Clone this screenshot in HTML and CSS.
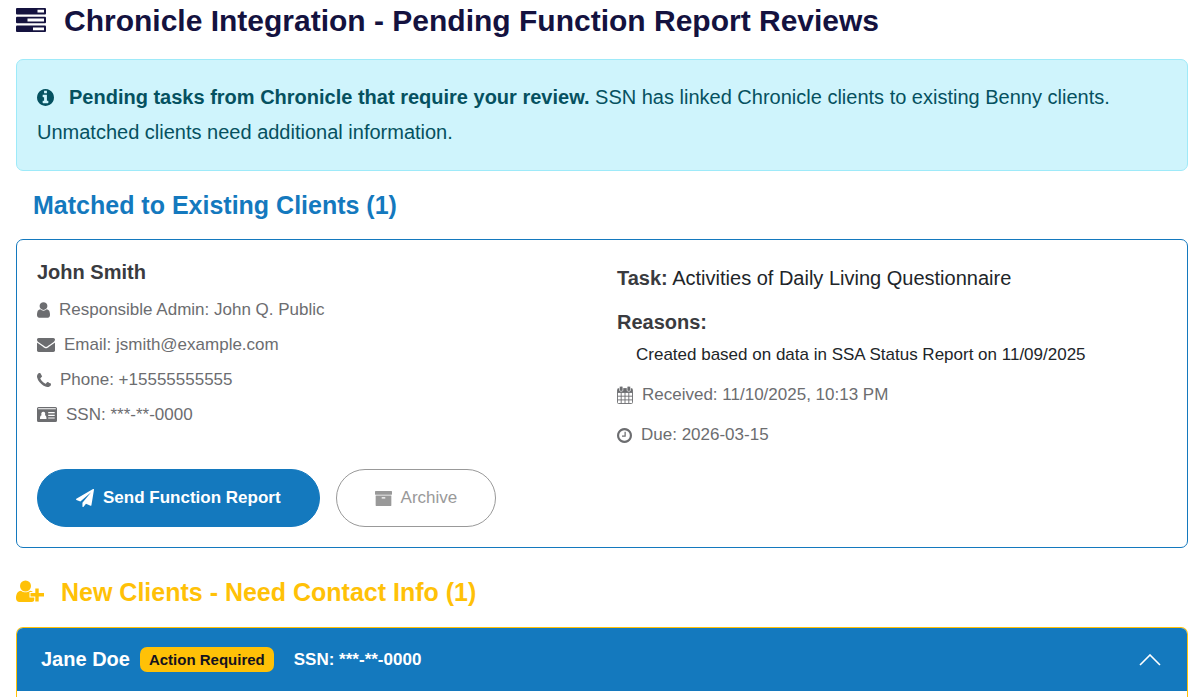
FILE: index.html
```html
<!DOCTYPE html>
<html lang="en">
<head>
<meta charset="utf-8">
<meta name="viewport" content="width=device-width, initial-scale=1">
<title>Chronicle Integration</title>
<link rel="stylesheet" href="styles.css">
</head>
<body>
<main class="page">
  <h1 class="page-title">
    <svg class="icon-server" width="30" height="26" viewBox="0 0 30 26" aria-hidden="true"><rect y="0" width="30" height="6.500" rx="1"/><rect y="8.800" width="30" height="6.500" rx="1"/><rect y="17.600" width="30" height="6.500" rx="1"/><path d="M21.500 1.800h6.500v2.800h-6.500zM11.500 10.600H28v2.800H11.500zM17 19.400h11v2.800H17z" fill="#fff"/></svg>
    Chronicle Integration - Pending Function Report Reviews
  </h1>

  <div class="alert" role="status">
    <svg class="icon-info" width="17" height="17" viewBox="128 128 1536 1536" aria-hidden="true"><path d="M1152 1376v-160q0-14-9-23t-23-9h-96v-512q0-14-9-23t-23-9h-320q-14 0-23 9t-9 23v160q0 14 9 23t23 9h96v320h-96q-14 0-23 9t-9 23v160q0 14 9 23t23 9h448q14 0 23-9t9-23zm-128-896v-160q0-14-9-23t-23-9h-192q-14 0-23 9t-9 23v160q0 14 9 23t23 9h192q14 0 23-9t9-23zm640 416q0 209-103 385.500t-279.500 279.500-385.500 103-385.500-103-279.500-279.500-103-385.500 103-385.500 279.500-279.500 385.500-103 385.500 103 279.500 279.500 103 385.500z"/></svg><strong>Pending tasks from Chronicle that require your review.</strong> SSN has linked Chronicle clients to existing Benny clients. Unmatched clients need additional information.
  </div>

  <h2 class="section-title matched">Matched to Existing Clients (1)</h2>

  <article class="card">
    <div class="card-columns">
      <div>
        <h3 class="client-name">John Smith</h3>
        <ul class="details">
          <li><svg width="13" height="16" viewBox="256 128 1280 1536" aria-hidden="true"><path d="M1536 1399q0 109-62.500 187t-150.500 78h-854q-88 0-150.500-78t-62.500-187q0-85 8.500-160.500t31.500-152 58.500-131 94-89 134.500-34.500q131 128 313 128t313-128q76 0 134.500 34.500t94 89 58.500 131 31.500 152 8.500 160.500zm-256-887q0 159-112.500 271.500t-271.500 112.500-271.500-112.500-112.500-271.500 112.500-271.500 271.500-112.500 271.500 112.500 112.500 271.500z"/></svg>Responsible Admin: John Q. Public</li>
          <li><svg width="18" height="18" viewBox="0 64 1792 1792" aria-hidden="true"><path d="M1792 710v794q0 66-47 113t-113 47h-1472q-66 0-113-47t-47-113v-794q44 49 101 87 362 246 497 345 57 42 92.500 65.500t94.500 48 110 24.500h2q51 0 110-24.500t94.500-48 92.500-65.500q170-123 498-345 57-39 100-87zm0-294q0 79-49 151t-122 123q-376 261-468 325-10 7-42.500 31t-54 38.500-52 32.500-57.500 27-50 9h-2q-23 0-50-9t-57.500-27-52-32.500-54-38.500-42.500-31q-91-64-262-182.500t-205-142.500q-62-42-117-115.500t-55-136.500q0-78 41.500-130t118.500-52h1472q65 0 112.500 47t47.500 113z"/></svg>Email: jsmith@example.com</li>
          <li><svg width="14" height="14" viewBox="192 128 1408 1408" aria-hidden="true"><path d="M1600 1240q0 27-10 70.500t-21 68.500q-21 50-122 106-94 51-186 51-27 0-53-3.500t-57.500-12.500-47-14.500-55.500-20.500-49-18q-98-35-175-83-127-79-264-216t-216-264q-48-77-83-175-3-9-18-49t-20.500-55.500-14.500-47-12.500-57.500-3.500-53q0-92 51-186 56-101 106-122 25-11 68.500-21t70.500-10q14 0 21 3 18 6 53 76 11 19 30 54t35 63.500 31 53.500q3 4 17.500 25t21.500 35.500 7 28.500q0 20-28.500 50t-62 55-62 53-28.500 46q0 9 5 22.500t8.500 20.500 14 24 11.500 19q76 137 174 235t235 174q2 1 19 11.500t24 14 20.500 8.500 22.500 5q18 0 46-28.500t53-62 55-62 50-28.500q14 0 28.500 7t35.500 21.500 25 17.500q25 15 53.500 31t63.500 35 54 30q70 35 76 53 3 7 3 21z"/></svg>Phone: +15555555555</li>
          <li><svg width="20" height="15" viewBox="0 0 20 15" aria-hidden="true"><path fill-rule="evenodd" d="M1.500 0h17A1.500 1.500 0 0 1 20 1.500v12a1.500 1.500 0 0 1-1.500 1.500h-17A1.500 1.500 0 0 1 0 13.500v-12A1.500 1.500 0 0 1 1.500 0zM1.200 1.200v1h17.600v-1zM3 12h6.500c0-2.500-.5-3.400-1.600-3.700.8-1.600.3-3.600-1.600-3.600S3.800 6.700 4.600 8.300C3.500 8.600 3 9.500 3 12zM11.200 5v1.200h6.500V5zM11.200 7.700v1.200h6.500V7.700zM11.200 10.400v1.200h6.500v-1.200z"/></svg>SSN: ***-**-0000</li>
        </ul>
      </div>
      <div class="task">
        <p class="task-line"><strong>Task:</strong> Activities of Daily Living Questionnaire</p>
        <p class="task-line reasons"><strong>Reasons:</strong></p>
        <p class="reason">Created based on data in SSA Status Report on 11/09/2025</p>
        <ul class="details dates">
          <li><svg width="16" height="18" viewBox="0 0 16 18" aria-hidden="true"><path d="M1.500 2.500h13a1 1 0 0 1 1 1v13a1 1 0 0 1-1 1h-13a1 1 0 0 1-1-1v-13a1 1 0 0 1 1-1zM.5 6.500h15M.5 10.200h15M.5 13.900h15M4.200 6.500v11M8 6.500v11M11.800 6.500v11" fill="none" stroke="currentColor" stroke-width=".9"/><path d="M1 3h14v3H1z"/><rect x="2.500" y=".3" width="3.400" height="5" rx="1.200" stroke="#fff" stroke-width=".6"/><rect x="10.100" y=".3" width="3.400" height="5" rx="1.200" stroke="#fff" stroke-width=".6"/></svg>Received: 11/10/2025, 10:13 PM</li>
          <li><svg width="15" height="15" viewBox="128 128 1536 1536" aria-hidden="true"><path d="M1024 544v448q0 14-9 23t-23 9h-320q-14 0-23-9t-9-23v-64q0-14 9-23t23-9h224v-352q0-14 9-23t23-9h64q14 0 23 9t9 23zm416 352q0-148-73-273t-198-198-273-73-273 73-198 198-73 273 73 273 198 198 273 73 273-73 198-198 73-273zm224 0q0 209-103 385.500t-279.500 279.500-385.500 103-385.500-103-279.500-279.500-103-385.500 103-385.500 279.500-279.500 385.500-103 385.500 103 279.500 279.500 103 385.500z"/></svg>Due: 2026-03-15</li>
        </ul>
      </div>
    </div>
    <div class="actions">
      <button type="button" class="btn btn-primary"><svg width="18" height="18" viewBox="0 0 1792 1792" aria-hidden="true"><path d="M1764 11q33 24 27 64l-256 1536q-5 29-32 45-14 8-31 8-11 0-24-5l-453-185-242 295q-18 23-49 23-13 0-22-4-19-7-30.500-23.500t-11.500-36.500v-349l864-1059-1069 925-395-162q-37-14-40-55-2-40 32-59l1664-960q15-9 32-9 20 0 36 11z"/></svg>Send Function Report</button>
      <button type="button" class="btn btn-outline"><svg width="17" height="15" viewBox="64 128 1664 1536" preserveAspectRatio="none" aria-hidden="true"><path d="M1088 832q0-26-19-45t-45-19h-256q-26 0-45 19t-19 45 19 45 45 19h256q26 0 45-19t19-45zm576-192v960q0 26-19 45t-45 19h-1408q-26 0-45-19t-19-45v-960q0-26 19-45t45-19h1408q26 0 45 19t19 45zm64-448v256q0 26-19 45t-45 19h-1536q-26 0-45-19t-19-45v-256q0-26 19-45t45-19h1536q26 0 45 19t19 45z"/></svg>Archive</button>
    </div>
  </article>

  <h2 class="section-title new-clients">
    <svg width="28" height="24" viewBox="0 0 28 24" aria-hidden="true"><circle cx="9.500" cy="6" r="5.500"/><path d="M5 10.700c2.800 2 6.200 2 9 0 3.600.1 5 3.800 5 7.500 0 2.300-1.500 3.700-3.500 3.700h-12C1.500 21.900 0 20.500 0 18.200c0-3.800 1.500-7.400 5-7.500z"/><path d="M19.300 8.500h3.400v4.600H28v3.400h-5.300v5h-3.400v-5h-4.800v-3.400h4.800z" stroke="#fff" stroke-width="2" paint-order="stroke"/></svg>
    New Clients - Need Contact Info (1)
  </h2>

  <section class="accordion">
    <button type="button" class="accordion-header" aria-expanded="true" aria-controls="jane-panel">
      <span class="accordion-name">Jane Doe</span>
      <span class="badge">Action Required</span>
      <span class="accordion-ssn">SSN: ***-**-0000</span>
      <svg class="chevron" width="22" height="12" viewBox="0 0 22 12" aria-hidden="true"><path d="M1 11 11 1l10 10" fill="none" stroke="currentColor" stroke-width="1.600"/></svg>
    </button>
    <div class="accordion-panel" id="jane-panel"></div>
  </section>
</main>
</body>
</html>
```

FILE: styles.css
```css
* { box-sizing: border-box; }

body {
  margin: 0;
  background: #fff;
  color: #212529;
  font-family: "Liberation Sans", Arial, sans-serif;
  font-size: 17px;
}

h1, h2, h3, p, ul { margin: 0; padding: 0; }
ul { list-style: none; }
svg { fill: currentColor; flex: none; }

.page {
  display: flex;
  flex-direction: column;
  min-height: 100vh;
  padding: 3px 12px 0 16px;
}

.page-title {
  display: flex;
  align-items: center;
  gap: 18px;
  color: #14123f;
  font-size: 30px;
  line-height: 36px;
}

.alert {
  margin-top: 20px;
  padding: 20px;
  border: 1px solid #9eeaf9;
  border-radius: 7px;
  background: #cff4fc;
  color: #055160;
  font-size: 20px;
  line-height: 35px;
}
.icon-info { margin-right: 15px; vertical-align: -2px; }

.section-title { font-size: 25px; line-height: 30px; }
.matched { margin: 19px 0; padding-left: 17px; color: #1479be; }
.new-clients {
  display: flex;
  align-items: center;
  gap: 17px;
  margin: 29px 0 20px;
  color: #ffc107;
}

.card {
  padding: 20px;
  border: 1px solid #1479be;
  border-radius: 7px;
}
.card-columns {
  display: grid;
  grid-template-columns: 1fr 1fr;
  column-gap: 30px;
}
.client-name { color: #3a3b40; font-size: 20px; line-height: 24px; }
.details { margin-top: 8px; color: #6c6d70; }
.details li {
  display: flex;
  align-items: center;
  gap: 9px;
  line-height: 35px;
}
.task { padding-top: 6px; }
.task-line { font-size: 20px; line-height: 24px; }
.task-line strong { color: #3a3b40; }
.reasons { margin-top: 20px; }
.reason { margin-top: 1px; padding-left: 19px; line-height: 40px; }
.dates { margin-top: 0; }
.dates li { line-height: 40px; }

.actions { display: flex; gap: 16px; margin-top: 14px; }
.btn {
  display: inline-flex;
  align-items: center;
  gap: 9px;
  padding: 18px 38px;
  border: 1px solid #1479be;
  border-radius: 29px;
  font: inherit;
  line-height: 20px;
}
.btn-primary { background: #1479be; color: #fff; font-weight: 700; }
.btn-outline { border-color: #999; background: #fff; color: #999; }

.accordion {
  flex: 1;
  border: 1px solid #ffc107;
  border-bottom: 0;
  border-radius: 7px 7px 0 0;
  overflow: hidden;
}
.accordion-header {
  display: flex;
  align-items: center;
  width: 100%;
  padding: 19px 26px 19px 24px;
  border: 0;
  background: #1479be;
  color: #fff;
  font: inherit;
  font-weight: 700;
}
.accordion-name { font-size: 20px; }
.badge {
  margin: 0 20px 0 10px;
  padding: 0 9px;
  border-radius: 7px;
  background: #ffc107;
  color: #14121f;
  font-size: 15px;
  line-height: 25px;
}
.chevron { margin-left: auto; }
.accordion-panel { background: #fff; }
```
